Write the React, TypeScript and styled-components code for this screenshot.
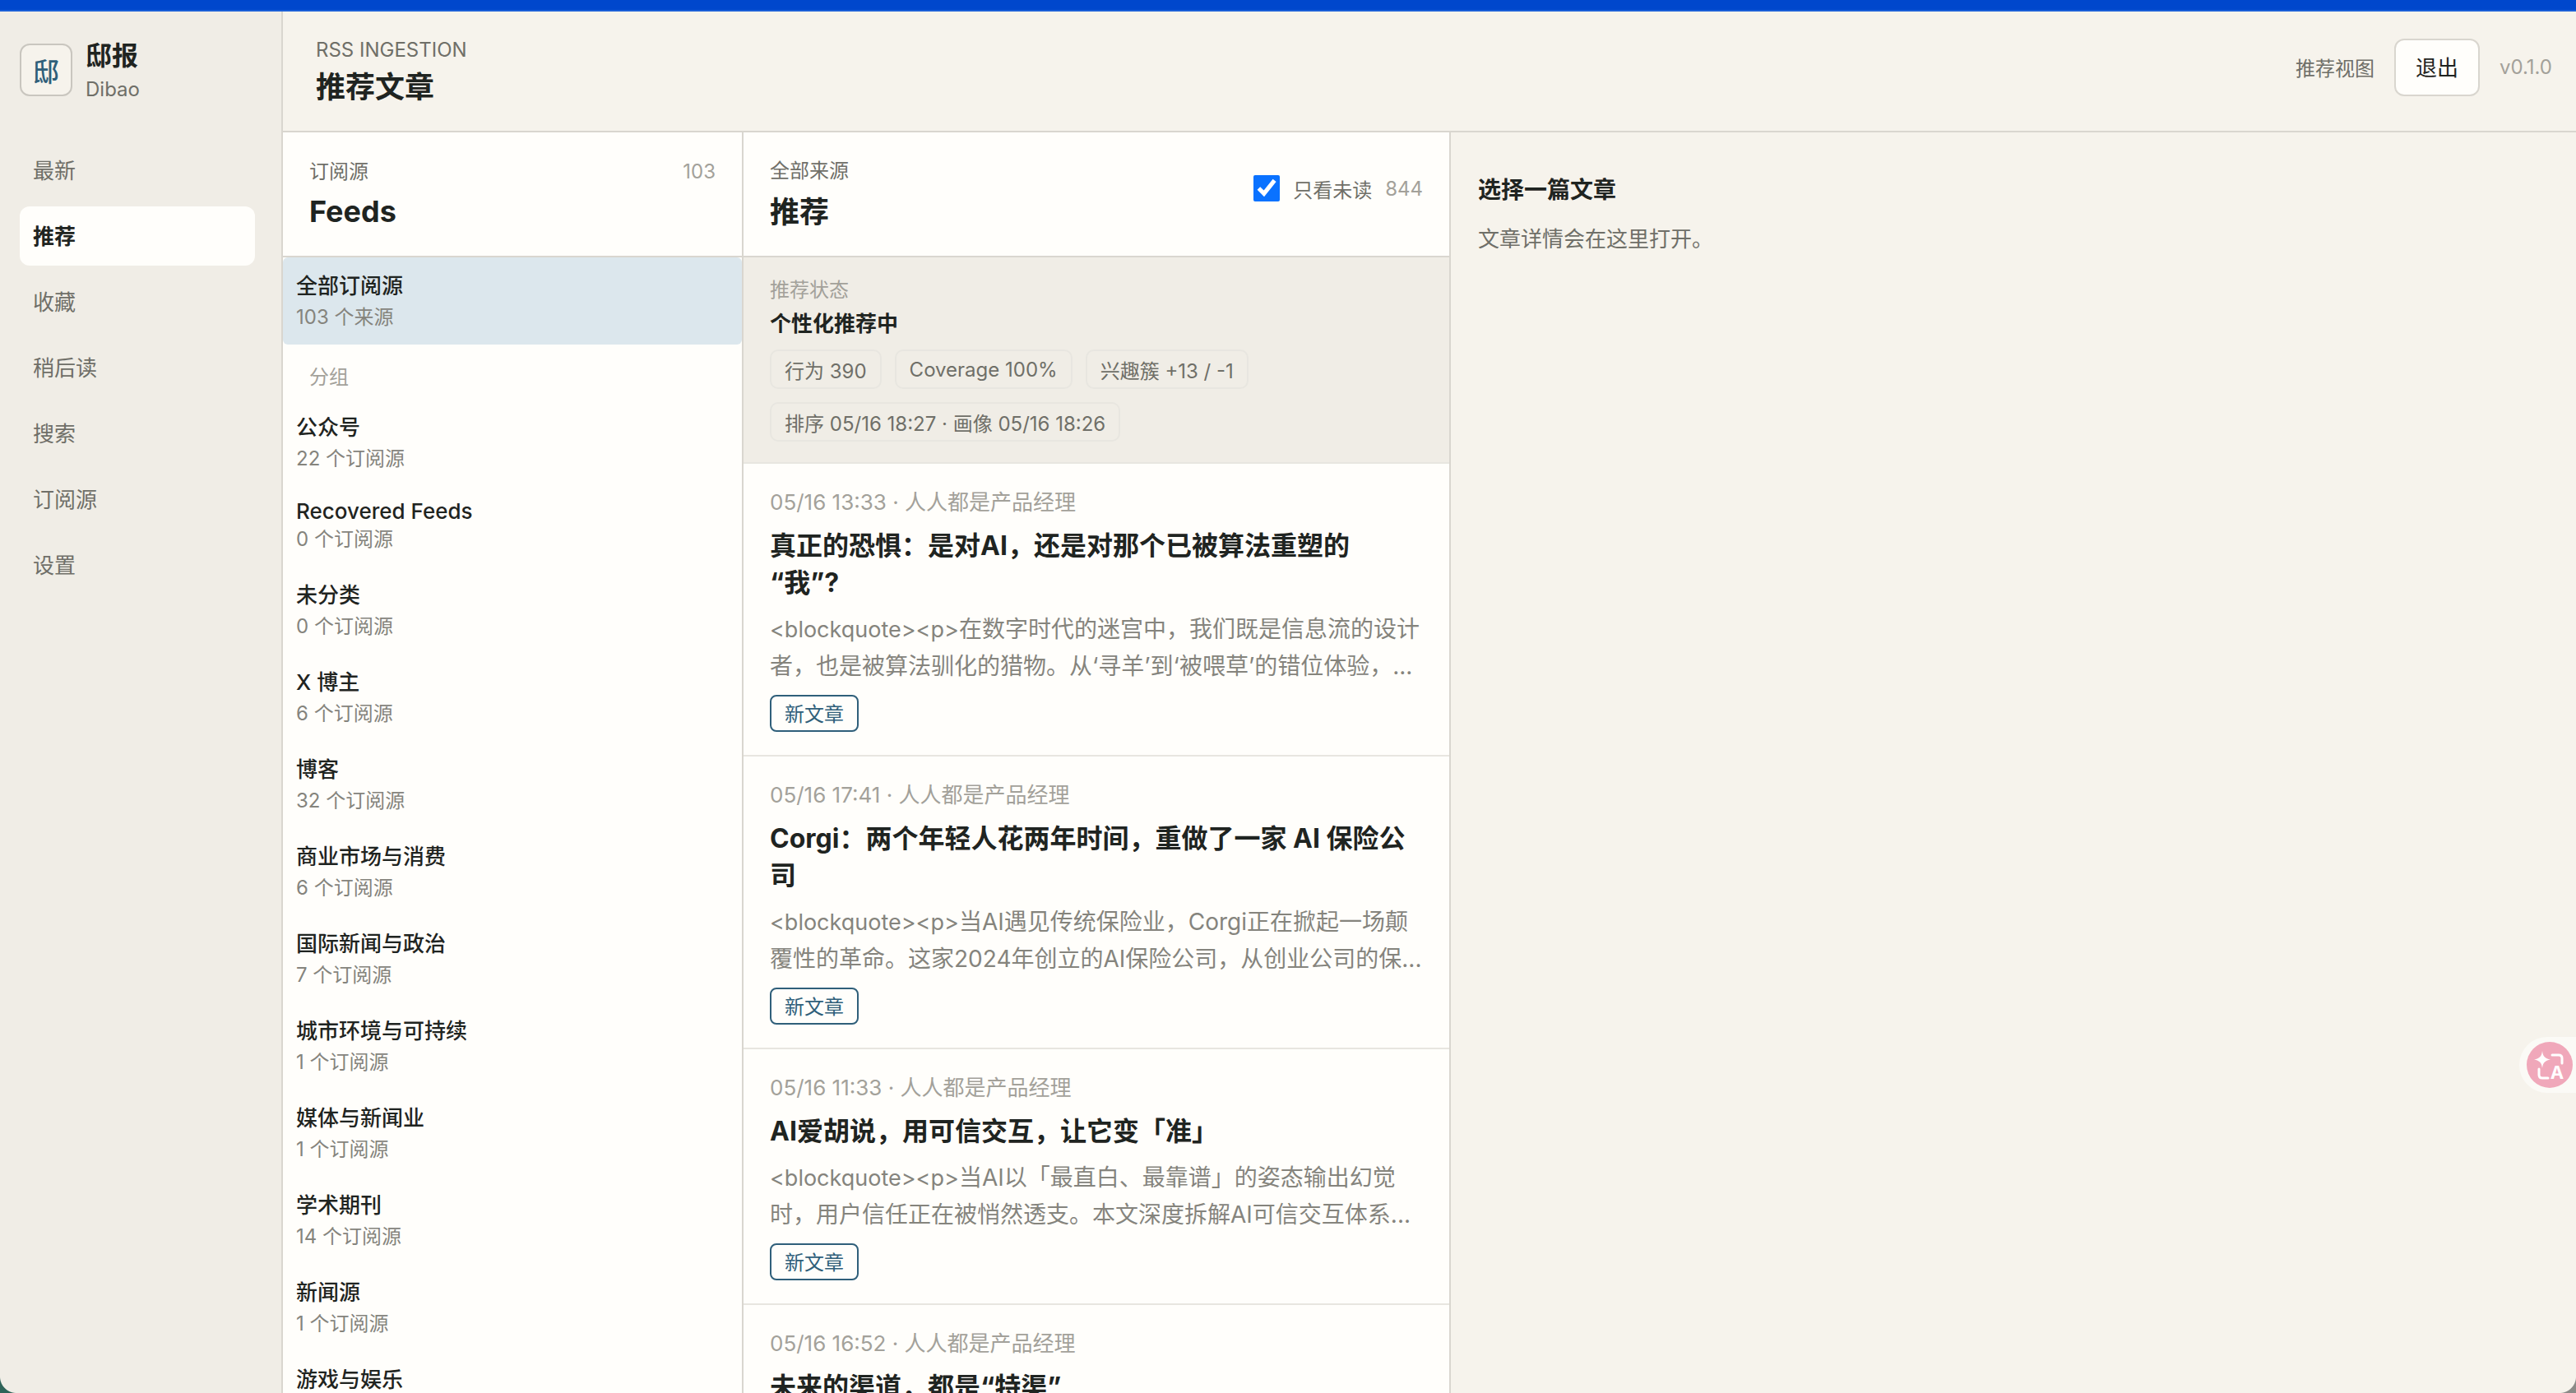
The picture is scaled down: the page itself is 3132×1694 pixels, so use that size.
import React from "react";
import styled, { createGlobalStyle } from "styled-components";

const GlobalStyle = createGlobalStyle`
  html, body {
    margin: 0;
    padding: 0;
    height: 100%;
    overflow: hidden;
    background: #f6f3ec;
  }
  * {
    box-sizing: border-box;
  }
  body {
    font-family: Inter, "Noto Sans CJK SC", sans-serif;
    color: #1f2421;
  }
`;

const Frame = styled.div`
  position: relative;
  height: 100vh;
  display: flex;
  flex-direction: column;
  overflow: hidden;
`;

const TopStrip = styled.div`
  flex: none;
  height: 14px;
  background: #0047cc;
  border-bottom: 2px solid #1a5fd8;
`;

const Shell = styled.div`
  flex: 1;
  min-height: 0;
  display: flex;
`;

const Sidebar = styled.aside`
  flex: none;
  width: 344px;
  background: #f0ede6;
  border-right: 2px solid #d9d6cf;
  padding: 39px 32px 0 24px;
`;

const Brand = styled.div`
  display: flex;
  align-items: center;
  gap: 16px;
  height: 64px;
`;

const LogoBox = styled.div`
  flex: none;
  width: 64px;
  height: 64px;
  border: 2px solid #c9c6bf;
  border-radius: 12px;
  background: #f6f3ec;
  color: #2f5f7a;
  font-size: 32px;
  font-weight: 500;
  display: flex;
  align-items: center;
  justify-content: center;
`;

const BrandText = styled.div`
  display: flex;
  flex-direction: column;
  margin-top: 2px;
`;

const BrandName = styled.div`
  font-size: 32px;
  font-weight: 700;
  line-height: 42px;
`;

const BrandSub = styled.div`
  margin-top: 4px;
  font-size: 24px;
  line-height: 32px;
  color: #6f6f68;
`;

const Nav = styled.nav`
  display: flex;
  flex-direction: column;
  gap: 8px;
  margin-top: 54px;
`;

const NavItem = styled.div<{ $active?: boolean }>`
  height: 72px;
  padding: 0 16px 3px;
  border-radius: 12px;
  display: flex;
  align-items: center;
  font-size: 26px;
  font-weight: ${(p) => (p.$active ? 700 : 400)};
  color: ${(p) => (p.$active ? "#1f2421" : "#6f6f68")};
  background: ${(p) => (p.$active ? "#fffefb" : "transparent")};
`;

const Main = styled.div`
  flex: 1;
  min-width: 0;
  display: flex;
  flex-direction: column;
`;

const Header = styled.header`
  flex: none;
  height: 147px;
  border-bottom: 2px solid #d9d6cf;
  padding: 0 29px 0 40px;
  display: flex;
  align-items: center;
  justify-content: space-between;
`;

const HeaderTitles = styled.div`
  display: flex;
  flex-direction: column;
  margin-top: 2px;
`;

const Eyebrow = styled.div`
  font-size: 24px;
  line-height: 32px;
  color: #6f6f68;
`;

const PageTitle = styled.h1`
  margin: 5px 0 0;
  font-size: 36px;
  line-height: 48px;
  font-weight: 700;
`;

const HeaderActions = styled.div`
  display: flex;
  align-items: center;
  gap: 24px;
  margin-bottom: 10px;
`;

const ViewLabel = styled.span`
  font-size: 24px;
  color: #6f6f68;
`;

const LogoutButton = styled.button`
  width: 104px;
  height: 70px;
  padding: 0 0 3px;
  border: 2px solid #d9d6cf;
  border-radius: 12px;
  background: #fffefb;
  color: #1f2421;
  font-family: inherit;
  font-size: 26px;
`;

const Version = styled.span`
  font-size: 24px;
  color: #a3a19a;
`;

const Columns = styled.div`
  flex: 1;
  min-height: 0;
  display: flex;
`;

const FeedColumn = styled.section`
  flex: none;
  width: 560px;
  background: #fffefb;
  border-right: 2px solid #d9d6cf;
  overflow: hidden;
`;

const FeedHead = styled.div`
  height: 152px;
  border-bottom: 2px solid #d9d6cf;
  padding: 32px 32px 0;
  display: flex;
  justify-content: space-between;
  align-items: flex-start;
`;

const HeadStack = styled.div`
  display: flex;
  flex-direction: column;
`;

const HeadLabel = styled.div`
  font-size: 24px;
  line-height: 32px;
  color: #6f6f68;
`;

const HeadTitle = styled.h2`
  margin: 8px 0 0;
  font-size: 36px;
  line-height: 48px;
  font-weight: 700;
`;

const HeadCount = styled.span`
  font-size: 24px;
  line-height: 32px;
  color: #a3a19a;
`;

const FeedRow = styled.div<{ $active?: boolean }>`
  padding: 15px 16px;
  border-radius: ${(p) => (p.$active ? "6px" : "0")};
  background: ${(p) => (p.$active ? "#dce7ed" : "transparent")};
`;

const FeedName = styled.div<{ $latin?: boolean }>`
  font-size: 26px;
  line-height: ${(p) => (p.$latin ? "32px" : "40px")};
  font-weight: 500;
`;

const FeedMeta = styled.div`
  font-size: 24px;
  line-height: 36px;
  color: #85847d;
`;

const GroupLabel = styled.div`
  padding: 24px 32px 10px;
  font-size: 24px;
  line-height: 32px;
  color: #a3a19a;
`;

const ListColumn = styled.section`
  flex: none;
  width: 860px;
  background: #fffefb;
  border-right: 2px solid #d9d6cf;
  overflow: hidden;
`;

const ListHead = styled.div`
  height: 152px;
  border-bottom: 2px solid #d9d6cf;
  padding: 30px 32px 0;
  display: flex;
  justify-content: space-between;
  align-items: center;
`;

const ListHeadStack = styled(HeadStack)`
  align-self: flex-start;
  margin-top: 1px;

  h2 {
    margin-top: 10px;
  }
`;

const UnreadFilter = styled.label`
  display: flex;
  align-items: center;
  gap: 16px;
  margin-top: -44px;
  font-size: 24px;
  color: #6f6f68;
`;

const UnreadBox = styled.input`
  width: 32px;
  height: 32px;
  margin: 0;
  accent-color: #0a72ff;
`;

const UnreadCount = styled.span`
  color: #a3a19a;
`;

const StatusPanel = styled.div`
  height: 251px;
  background: #f0ede6;
  border-bottom: 2px solid #e8e6e0;
  padding: 24px 32px 0;
`;

const StatusLabel = styled.div`
  font-size: 24px;
  line-height: 32px;
  color: #a3a19a;
`;

const StatusTitle = styled.div`
  margin-top: 6px;
  font-size: 26px;
  line-height: 38px;
  font-weight: 700;
`;

const ChipRow = styled.div`
  display: flex;
  flex-wrap: wrap;
  gap: 16px;
  margin-top: 12px;
  max-width: 660px;
`;

const Chip = styled.span`
  height: 48px;
  padding: 0 16px;
  display: flex;
  align-items: center;
  border: 2px solid #e8e6e0;
  border-radius: 10px;
  font-size: 24px;
  color: #6f6f68;
`;

const Article = styled.article`
  padding: 29px 32px 28px;
  border-bottom: 2px solid #e8e6e0;
`;

const ArticleMeta = styled.div`
  font-size: 26px;
  line-height: 36px;
  color: #a3a19a;
`;

const ArticleTitle = styled.h3`
  margin: 12px 0 0;
  font-size: 32px;
  line-height: 45px;
  font-weight: 700;
  white-space: pre-line;
`;

const Excerpt = styled.p`
  margin: 12px 0 0;
  font-size: 28px;
  line-height: 44px;
  color: #85847d;
`;

const Markup = styled.span`
  font-size: 27px;
`;

const NewTag = styled.div`
  display: flex;
  align-items: center;
  width: fit-content;
  height: 45px;
  margin-top: 13px;
  padding: 0 16px 2px;
  border: 2px solid #2f5f7a;
  border-radius: 8px;
  font-size: 24px;
  color: #2f5f7a;
`;

const DetailPane = styled.section`
  flex: 1;
  min-width: 0;
  padding: 50px 33px;
`;

const DetailTitle = styled.h2`
  margin: 0;
  font-size: 28px;
  line-height: 40px;
  font-weight: 700;
`;

const DetailHint = styled.p`
  margin: 20px 0 0;
  font-size: 26px;
  line-height: 40px;
  color: #6f6f68;
`;

const TranslateTab = styled.div`
  position: absolute;
  right: -20px;
  top: 1261px;
  width: 89px;
  height: 68px;
  padding-left: 9px;
  display: flex;
  align-items: center;
  border-radius: 34px 0 0 34px;
  background: #fbfaf6;
`;

const TranslateDot = styled.svg`
  width: 56px;
  height: 56px;
`;

const WindowCorner = styled.div<{ $right?: boolean }>`
  position: absolute;
  bottom: 0;
  ${(p) => (p.$right ? "right: 0;" : "left: 0;")}
  width: 20px;
  height: 20px;
  background: ${(p) =>
    p.$right
      ? "radial-gradient(circle at 0 0, transparent 19.5px, #8b8b88 20.5px)"
      : "radial-gradient(circle at 100% 0, transparent 19.5px, #2f6459 20.5px)"};
`;

const groups = [
  ["公众号", "22 个订阅源"],
  ["Recovered Feeds", "0 个订阅源"],
  ["未分类", "0 个订阅源"],
  ["X 博主", "6 个订阅源"],
  ["博客", "32 个订阅源"],
  ["商业市场与消费", "6 个订阅源"],
  ["国际新闻与政治", "7 个订阅源"],
  ["城市环境与可持续", "1 个订阅源"],
  ["媒体与新闻业", "1 个订阅源"],
  ["学术期刊", "14 个订阅源"],
  ["新闻源", "1 个订阅源"],
  ["游戏与娱乐", "3 个订阅源"],
];

const articles = [
  {
    meta: "05/16 13:33 · 人人都是产品经理",
    title: "真正的恐惧\uFF1A是对AI\uFF0C还是对那个已被算法重塑的\n“我”?",
    excerpt:
      "在数字时代的迷宫中\uFF0C我们既是信息流的设计者\uFF0C也是被算法驯化的猎物。从‘寻羊’到‘被喂草’的错位体验\uFF0C...",
  },
  {
    meta: "05/16 17:41 · 人人都是产品经理",
    title: "Corgi\uFF1A两个年轻人花两年时间\uFF0C重做了一家 AI 保险公司",
    excerpt:
      "当AI遇见传统保险业\uFF0CCorgi正在掀起一场颠覆性的革命。这家2024年创立的AI保险公司\uFF0C从创业公司的保...",
  },
  {
    meta: "05/16 11:33 · 人人都是产品经理",
    title: "AI爱胡说\uFF0C用可信交互\uFF0C让它变「准」",
    excerpt:
      "当AI以「最直白、最靠谱」的姿态输出幻觉时\uFF0C用户信任正在被悄然透支。本文深度拆解AI可信交互体系...",
  },
  {
    meta: "05/16 16:52 · 人人都是产品经理",
    title: "未来的渠道\uFF0C都是“特渠”",
    excerpt: "渠道正在发生变化。",
  },
];

const navItems = ["最新", "推荐", "收藏", "稍后读", "搜索", "订阅源", "设置"];

export default function App() {
  return (
    <Frame>
      <GlobalStyle />
      <TopStrip />
      <Shell>
        <Sidebar>
          <Brand>
            <LogoBox>邸</LogoBox>
            <BrandText>
              <BrandName>邸报</BrandName>
              <BrandSub>Dibao</BrandSub>
            </BrandText>
          </Brand>
          <Nav>
            {navItems.map((item) => (
              <NavItem key={item} $active={item === "推荐"}>
                {item}
              </NavItem>
            ))}
          </Nav>
        </Sidebar>
        <Main>
          <Header>
            <HeaderTitles>
              <Eyebrow>RSS INGESTION</Eyebrow>
              <PageTitle>推荐文章</PageTitle>
            </HeaderTitles>
            <HeaderActions>
              <ViewLabel>推荐视图</ViewLabel>
              <LogoutButton>退出</LogoutButton>
              <Version>v0.1.0</Version>
            </HeaderActions>
          </Header>
          <Columns>
            <FeedColumn>
              <FeedHead>
                <HeadStack>
                  <HeadLabel>订阅源</HeadLabel>
                  <HeadTitle>Feeds</HeadTitle>
                </HeadStack>
                <HeadCount>103</HeadCount>
              </FeedHead>
              <FeedRow $active>
                <FeedName>全部订阅源</FeedName>
                <FeedMeta>103 个来源</FeedMeta>
              </FeedRow>
              <GroupLabel>分组</GroupLabel>
              {groups.map(([name, meta]) => (
                <FeedRow key={name}>
                  <FeedName $latin={name === "Recovered Feeds"}>{name}</FeedName>
                  <FeedMeta>{meta}</FeedMeta>
                </FeedRow>
              ))}
            </FeedColumn>
            <ListColumn>
              <ListHead>
                <ListHeadStack>
                  <HeadLabel>全部来源</HeadLabel>
                  <HeadTitle>推荐</HeadTitle>
                </ListHeadStack>
                <UnreadFilter>
                  <UnreadBox type="checkbox" defaultChecked />
                  只看未读
                  <UnreadCount>844</UnreadCount>
                </UnreadFilter>
              </ListHead>
              <StatusPanel>
                <StatusLabel>推荐状态</StatusLabel>
                <StatusTitle>个性化推荐中</StatusTitle>
                <ChipRow>
                  <Chip>行为 390</Chip>
                  <Chip>Coverage 100%</Chip>
                  <Chip>兴趣簇 +13 / -1</Chip>
                  <Chip>排序 05/16 18:27 · 画像 05/16 18:26</Chip>
                </ChipRow>
              </StatusPanel>
              {articles.map((a) => (
                <Article key={a.meta}>
                  <ArticleMeta>{a.meta}</ArticleMeta>
                  <ArticleTitle>{a.title}</ArticleTitle>
                  <Excerpt>
                    <Markup>{"<blockquote><p>"}</Markup>
                    {a.excerpt}
                  </Excerpt>
                  <NewTag>新文章</NewTag>
                </Article>
              ))}
            </ListColumn>
            <DetailPane>
              <DetailTitle>选择一篇文章</DetailTitle>
              <DetailHint>文章详情会在这里打开。</DetailHint>
            </DetailPane>
          </Columns>
        </Main>
      </Shell>
      <TranslateTab>
        <TranslateDot viewBox="0 0 56 56">
          <circle cx="28" cy="28" r="28" fill="#f0a8ba" />
          <path
            d="M19 11 C20 18 22 20 29 21.5 C22 23 20 25 19 32 C18 25 16 23 9 21.5 C16 20 18 18 19 11 Z"
            fill="#fff"
          />
          <path
            d="M31 16 H39 Q43 16 43 20 V26 M15 33 V40 Q15 44 19 44 H26"
            fill="none"
            stroke="#fff"
            strokeWidth="3"
            strokeLinecap="round"
          />
          <text
            x="37"
            y="45"
            textAnchor="middle"
            fill="#fff"
            fontSize="22"
            fontWeight="700"
            fontFamily="Inter, sans-serif"
          >
            A
          </text>
        </TranslateDot>
      </TranslateTab>
      <WindowCorner />
      <WindowCorner $right />
    </Frame>
  );
}
